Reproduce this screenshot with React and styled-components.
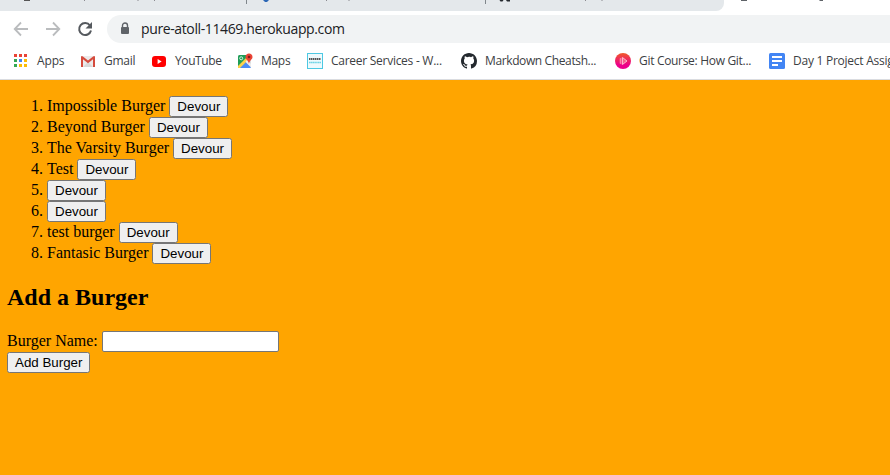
import React from 'react';
import styled, { createGlobalStyle } from 'styled-components';

const Global = createGlobalStyle`
  * { box-sizing: border-box; }
  html, body { margin: 0; background: #ffa500; overflow: hidden; }
`;
const Window = styled.div`width: 890px; height: 475px; overflow: hidden; background: #ffa500;`;
const Chrome = styled.header`height: 80px; background: #fff; border-bottom: 1px solid #dadce0; overflow: hidden;`;
const TabStrip = styled.div`height: 11px; display: flex; background: #fff;`;
const InactiveTabs = styled.div`width: 724px; height: 11px; background: #e4e8eb; border-radius: 0 0 8px 0;`;
const Strip = styled.svg`display: block; flex: none; overflow: visible;`;
const Toolbar = styled.div`height: 36px; display: flex; align-items: center;`;
const NavButtons = styled.div`width: 107px; display: flex; flex: none; padding-left: 13px; gap: 16px; svg { display: block; }`;
const AddressBar = styled.div`
  height: 28px; flex: 1; display: flex; align-items: center; gap: 11px; padding-left: 13px;
  background: #f1f3f4; border-radius: 14px 0 0 14px;
`;
const Url = styled.span`font: 14px/20px "Open Sans", sans-serif; letter-spacing: ${p => p.$track}px; color: #202124; white-space: nowrap;`;
const Bookmarks = styled.nav`height: 28px; padding-left: 13px; display: flex; align-items: center; overflow: hidden;`;
const Bookmark = styled.a`
  flex: 0 0 ${p => p.$w}px; display: flex; align-items: center; gap: 8px; white-space: nowrap;
  font: 12px/16px "Open Sans", sans-serif; letter-spacing: ${p => p.$track}px; color: #3c4043;
  svg { flex: none; display: block; }
`;
const Page = styled.main`
  padding: 16px 7px 0; color: #000; font: 16px/18px "Liberation Serif", serif;
`;
const BurgerList = styled.ol`margin: 0; padding-left: 40px;`;
const Burger = styled.li`height: 21px; line-height: 19px;`;
const Button = styled.button`
  height: 21px; padding: 1px 7px; border: 1px solid #767676; border-radius: 2.5px; background: #efefef;
  color: #000; font: 13.333px/normal "Liberation Sans", Arial, sans-serif; vertical-align: top;
`;
const Heading = styled.h2`margin: 19px 0 20px; font-size: 24px; line-height: 28px;`;
const Field = styled.label`display: flex; align-items: flex-start; gap: 4px; height: 21px; line-height: 19px;`;
const Input = styled.input`width: 177px; height: 21px; margin: 0; border: 1px solid #767676; border-radius: 2px; background: #fff;`;

const Icon = ({ children }) => <svg width="16" height="16" viewBox="0 0 16 16">{children}</svg>;
const githubPath = "M8 0C3.58 0 0 3.58 0 8c0 3.54 2.29 6.53 5.47 7.59.4.07.55-.17.55-.38 0-.19-.01-.82-.01-1.49-2.01.37-2.53-.49-2.69-.94-.09-.23-.48-.94-.82-1.13-.28-.15-.68-.52-.01-.53.63-.01 1.08.58 1.23.82.72 1.21 1.87.87 2.33.66.07-.52.28-.87.51-1.07-1.78-.2-3.64-.89-3.64-3.95 0-.87.31-1.59.82-2.15-.08-.2-.36-1.02.08-2.12 0 0 .67-.21 2.2.82A7.65 7.65 0 0 1 8 3.87c.68 0 1.36.09 2 .27 1.53-1.04 2.2-.82 2.2-.82.44 1.1.16 1.92.08 2.12.51.56.82 1.27.82 2.15 0 3.07-1.87 3.75-3.65 3.95.29.25.54.73.54 1.48 0 1.07-.01 1.93-.01 2.2 0 .21.15.46.55.38A8.01 8.01 0 0 0 16 8c0-4.42-3.58-8-8-8z";

const icons = {
  apps: <Icon>{['#ea4335','#ea4335','#ea4335','#34a853','#4285f4','#fbbc05','#34a853','#fbbc05','#fbbc05'].map((c, i) =>
    <rect key={i} x={1 + (i % 3) * 5} y={1 + Math.floor(i / 3) * 5} width="3" height="3" fill={c} />)}</Icon>,
  gmail: <Icon><path d="M1 3h14v11H1z" fill="#eceaea" /><path d="M3 14 8 9l5 5z" fill="#d8d8d8" /><path d="M1 3.2h1.6L8 7.6l5.4-4.4H15V14h-2V6.2L8 10.3 3 6.2V14H1z" fill="#d54b3d" /></Icon>,
  youtube: <Icon><rect x="1" y="3" width="14" height="11" rx="3" fill="#f00" /><path d="m6.6 6 4 2.5-4 2.5z" fill="#fff" /></Icon>,
  maps: <Icon><rect x="1" y="2" width="13" height="13" rx="1.5" fill="#ddd" /><path d="M1 14V3.5Q1 2 2.5 2H11v3L2 14z" fill="#1e9d57" /><path d="m2 14.6 6-6 6 6q-.3.4-1 .4H2z" fill="#4b8df8" /><path d="m1 13 9-9 2 2-9 9H1z" fill="#fdd34a" /><path d="m8.5 8.5 1.5-1.5 4 4v3z" fill="#eee" /><circle cx="4.2" cy="5.3" r="1.5" fill="none" stroke="#fff" strokeWidth=".8" /><path d="M12 .5c-2 0-3.5 1.5-3.5 3.4C8.5 6.5 11.5 7 12 11c.5-4 3.5-4.5 3.5-7.1C15.5 2 14 .5 12 .5z" fill="#ea4335" /><circle cx="12" cy="4" r="1.3" fill="#801f19" /></Icon>,
  career: <Icon><rect x=".5" y=".5" width="15" height="15" fill="#eefafd" stroke="#4dc9e3" /><path d="M2 6h12" stroke="#555" strokeWidth="2" strokeDasharray="1.5 .5" /><path d="M2 9.5h12" stroke="#70d4e6" strokeWidth="1.5" strokeDasharray="1.5 .3" /></Icon>,
  github: <Icon><path d={githubPath} fill="#24292e" /></Icon>,
  course: <Icon><defs><linearGradient id="course" x2="0" y2="1"><stop stopColor="#f05a28" /><stop offset=".75" stopColor="#ec008c" /></linearGradient></defs><circle cx="8" cy="8" r="8" fill="url(#course)" /><path d="M4.7 5.5v5l1.8 1v-7z" fill="#ff7fa6" /><path d="M7.5 4.5v7l4.5-3.5z" fill="#f4608d" stroke="#ffd4e0" strokeWidth=".8" /></Icon>,
  docs: <Icon><rect width="16" height="16" rx="1.5" fill="#4285f4" /><path d="M3 4h10M3 8h10M3 12h6" stroke="#fff" strokeWidth="2" /></Icon>,
};
const bookmarks = [
  ['apps', 'Apps', 67, -.15], ['gmail', 'Gmail', 71, -.25], ['youtube', 'YouTube', 86, -.4], ['maps', 'Maps', 70, -.3],
  ['career', 'Career Services - W...', 154, -.27], ['github', 'Markdown Cheatsh...', 154, -.38],
  ['course', 'Git Course: How Git...', 154, -.31], ['docs', 'Day 1 Project Assignment', 160, -.25],
];
const burgers = ['Impossible Burger', 'Beyond Burger', 'The Varsity Burger', 'Test', '', '', 'test burger', 'Fantasic Burger'];

export default function App() {
  return (
    <Window>
      <Global />
      <Chrome>
        <TabStrip>
          <InactiveTabs>
            <Strip width="890" height="11">
              <path d="M246.5 0v4M485.5 0v4" stroke="#80868b" />
              <path d="M24 0h6" stroke="#555" strokeWidth="2" />
              <path d="M263 0h6l-2 2h-2z" fill="#2c67b5" />
              <path d="M499.5 0h4l-1 1.5h-2zM506 0h4v1.5h-3z" fill="#24292e" />
              <path d="M84.5 0v1M138 0v1M154.500 0v1M326.500 0v1M349 0v1M585.500 0v1M602 0v1" stroke="#8c8b91" />
              <path d="M741 0h6M819.500 0h3.500" stroke="#5f6368" strokeWidth="2" />
            </Strip>
          </InactiveTabs>
        </TabStrip>
        <Toolbar>
          <NavButtons>
            <Icon><path d="M15 8H2M8 1.5 1.7 8 8 14.5" fill="none" stroke="#babcbe" strokeWidth="1.8" /></Icon>
            <Icon><path d="M1 8h13M8 1.5 14.3 8 8 14.5" fill="none" stroke="#babcbe" strokeWidth="1.8" /></Icon>
            <Icon><path d="M13 4.5A6 6 0 1 0 14 9.5" fill="none" stroke="#55595e" strokeWidth="2" /><path d="M15 1v6.5H8.5z" fill="#55595e" /></Icon>
          </NavButtons>
          <AddressBar>
            <svg width="10" height="14" viewBox="0 0 10 14"><path d="M2.5 6V3.5a2.5 2.5 0 0 1 5 0V6" fill="none" stroke="#5f6368" strokeWidth="1.4" /><rect x="1" y="5" width="8" height="7" rx="1" fill="#5f6368" /></svg>
            <Url $track={-.38}>pure-atoll-11469.herokuapp.com</Url>
          </AddressBar>
        </Toolbar>
        <Bookmarks>
          {bookmarks.map(([icon, label, w, track]) => <Bookmark key={icon} $w={w} $track={track}>{icons[icon]}<span>{label}</span></Bookmark>)}
        </Bookmarks>
      </Chrome>
      <Page>
        <BurgerList>
          {burgers.map((name, i) => <Burger key={i}>{name}{name && ' '}<Button>Devour</Button></Burger>)}
        </BurgerList>
        <Heading>Add a Burger</Heading>
        <form onSubmit={e => e.preventDefault()}>
          <Field>Burger Name:<Input type="text" /></Field>
          <Button>Add Burger</Button>
        </form>
      </Page>
    </Window>
  );
}
